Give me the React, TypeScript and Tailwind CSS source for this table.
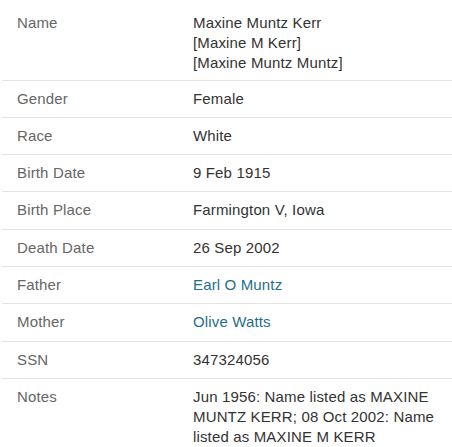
import React from "react";

type Row = { label: string; value: React.ReactNode; link?: boolean; tall?: boolean };

const rows: Row[] = [
  {
    label: "Name",
    value: (
      <>
        <div>Maxine Muntz Kerr</div>
        <div>[Maxine M Kerr]</div>
        <div>[Maxine Muntz Muntz]</div>
      </>
    ),
  },
  { label: "Gender", value: "Female" },
  { label: "Race", value: "White" },
  { label: "Birth Date", value: "9 Feb 1915" },
  { label: "Birth Place", value: "Farmington V, Iowa", tall: true },
  { label: "Death Date", value: "26 Sep 2002" },
  { label: "Father", value: "Earl O Muntz", link: true },
  { label: "Mother", value: "Olive Watts", link: true, tall: true },
  { label: "SSN", value: "347324056" },
  {
    label: "Notes",
    value:
      "Jun 1956: Name listed as MAXINE MUNTZ KERR; 08 Oct 2002: Name listed as MAXINE M KERR",
  },
];

export default function App() {
  return (
    <div
      className="w-[452px] h-[447px] bg-white overflow-hidden pt-[5px] text-[15px] leading-[20px] tracking-[0.15px]"
      style={{ fontFamily: '"Liberation Sans", Arial, sans-serif' }}
    >
      {rows.map((r, i) => (
        <div
          key={r.label}
          className={
            "flex ml-[2px] " +
            (i > 0 ? "border-t border-[#e3e3e3] " : "") +
            (i === 0 ? "pt-2 pb-[7px]" : r.tall ? "pt-2 pb-[9px]" : "py-2")
          }
        >
          <div className="w-[191px] shrink-0 pl-[15px] text-[#666666]">{r.label}</div>
          <div
            className={
              "w-[249px] " + (r.link ? "text-[#1f6e8c]" : "text-[#333333]")
            }
          >
            {r.value}
          </div>
        </div>
      ))}
    </div>
  );
}
